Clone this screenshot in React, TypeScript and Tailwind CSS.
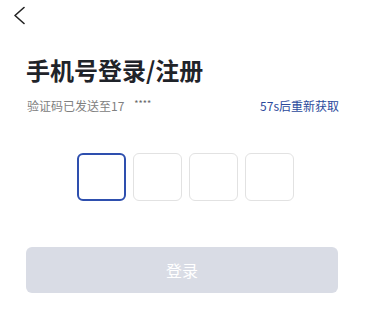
import React from "react";

export default function App() {
  return (
    <div className="w-[366px] h-[319px] bg-white flex flex-col font-['Noto_Sans_CJK_SC','Noto_Sans',sans-serif]">
      <div className="h-[31px] pl-[13px] pt-[6px]">
        <svg width="12" height="19" viewBox="0 0 12 19" fill="none">
          <polyline points="11,1.5 2,9.5 11,17.5" stroke="#222" strokeWidth="1.6" strokeLinecap="round" strokeLinejoin="round" />
        </svg>
      </div>
      <h1 className="mt-[27px] pl-[26px] text-[24px] leading-[24px] font-bold text-[#1f2329]">手机号登录/注册</h1>
      <div className="mt-[16px] h-[16px] pl-[27px] pr-[27px] flex justify-between items-center text-[12px] leading-[16px]">
        <div className="flex items-start text-[#808080]">
          <span>验证码已发送至17</span>
          <span className="ml-[10px] text-[9px] leading-[12px] text-[#666]">****</span>
        </div>
        <span className="text-[#2b4a9c]">57s后重新获取</span>
      </div>
      <div className="mt-[39px] ml-[77px] flex gap-[7px]">
        <div className="w-[49px] h-[48px] rounded-[6px] border-2 border-[#2e4fae]" />
        <div className="w-[49px] h-[48px] rounded-[6px] border border-[#e2e2e2]" />
        <div className="w-[49px] h-[48px] rounded-[6px] border border-[#e2e2e2]" />
        <div className="w-[49px] h-[48px] rounded-[6px] border border-[#e2e2e2]" />
      </div>
      <button className="mt-[46px] ml-[26px] mr-[28px] h-[46px] rounded-[6px] bg-[#d9dce5] text-white text-[16px] leading-[16px] flex items-center justify-center">
        登录
      </button>
    </div>
  );
}
